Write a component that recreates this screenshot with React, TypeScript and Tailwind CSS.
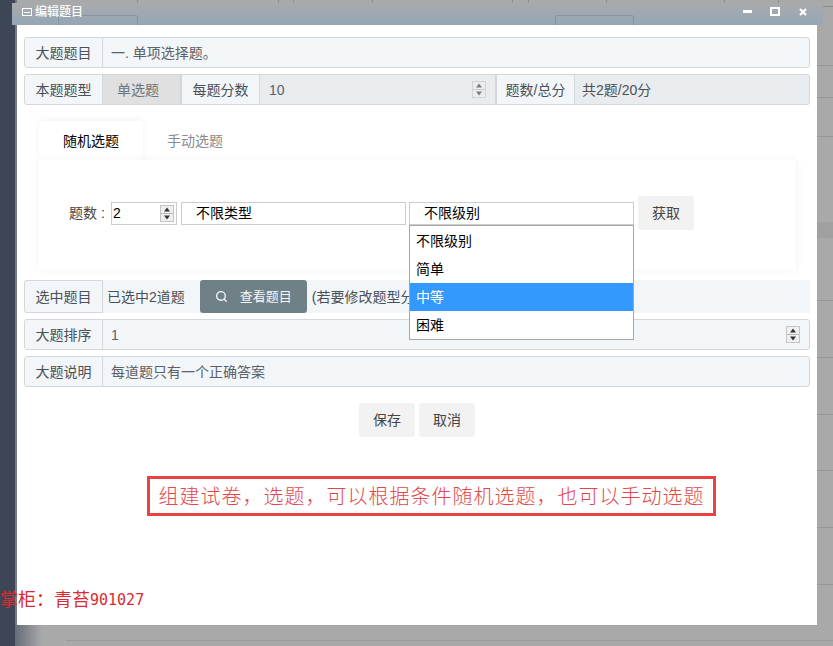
import { Search } from 'lucide-react';

const cjk = "font-['Liberation_Sans','Noto_Sans_CJK_SC',sans-serif]";

function Spinner({ className = '' }: { className?: string }) {
  return (
    <span className={`flex h-[17px] w-[14px] flex-col border border-[#c4c4c4] bg-[#efefef] ${className}`}>
      <svg viewBox="0 0 12 7" className="h-[7px] w-full">
        <path d="M6 1.5 9 5.5H3z" fill="#333" />
      </svg>
      <span className="h-px bg-[#b8b8b8]" />
      <svg viewBox="0 0 12 7" className="h-[7px] w-full">
        <path d="M3 1.5h6L6 5.5z" fill="#333" />
      </svg>
    </span>
  );
}

function Label({ children }: { children: React.ReactNode }) {
  return (
    <div className="flex w-[78px] shrink-0 items-center justify-center border-r border-[#d5d9dd] bg-[#f3f6f9] pt-px text-[#495057]">
      {children}
    </div>
  );
}

function Row({ label, value, spinner }: { label: string; value: string; spinner?: boolean }) {
  return (
    <div className="flex h-[31px] overflow-hidden rounded-[3px] border border-[#d3d6da] bg-[#f3f6f9] text-[#495057]">
      <Label>{label}</Label>
      <div className="flex flex-1 items-center justify-between pl-[8px] pr-[9px] text-[#5a6168]">
        <span className="pt-px">{value}</span>
        {spinner && <Spinner />}
      </div>
    </div>
  );
}

function GrayButton({ children }: { children: React.ReactNode }) {
  return (
    <button className="flex h-[34px] w-[56px] items-center justify-center rounded-[3px] bg-[#f2f2f2] text-[#444]">
      {children}
    </button>
  );
}

const levels = ['不限级别', '简单', '中等', '困难'];

// rules of the dimmed page that show at the right of the dialog
const pageLines = [65, 97, 136, 300, 357, 414, 470, 527, 584];

export default function App() {
  return (
    <div className={`relative h-[646px] w-[833px] overflow-hidden bg-[#a9a9a9] text-[14px] ${cjk}`}>
      {/* dimmed page behind the dialog */}
      <div className="absolute left-0 top-0 h-full w-[15px] bg-[#3c4656]" />
      <div className="absolute left-[15px] top-0 h-[625px] w-[2px] bg-[#747c88]" />
      <div className="absolute left-[15px] top-[625px] h-[21px] w-[27px] bg-gradient-to-r from-[#666e7a] to-[#a9a9a9]" />
      <div className="absolute left-[58px] top-0 h-[7px] w-[221px] rounded-br-[3px] border-b border-r border-[#8d8d8d]" />
      <div className="absolute left-[137px] top-0 h-[7px] w-px bg-[#8d8d8d]" />
      <div className="absolute left-[293px] top-0 h-[7px] w-[220px] rounded-b-[3px] border border-t-0 border-[#8d8d8d]" />
      <div className="absolute left-[372px] top-0 h-[7px] w-px bg-[#8d8d8d]" />
      <div className="absolute left-[528px] top-0 h-[7px] w-[197px] rounded-b-[3px] border border-t-0 border-[#8d8d8d]" />
      <div className="absolute left-[606px] top-0 h-[7px] w-px bg-[#8d8d8d]" />
      <div className="absolute left-[778px] top-0 h-[7px] w-[55px] border-b border-l border-[#8d8d8d]" />
      {pageLines.map((y) => (
        <div key={y} className="absolute left-[817px] h-px w-[16px] bg-[#969696]" style={{ top: y }} />
      ))}
      <div className="absolute left-[817px] top-[222px] h-[16px] w-[16px] bg-[#a0a0a0]" />
      <div className="absolute left-[66px] top-[640px] h-px w-[767px] bg-[#999999]" />

      {/* dialog window */}
      <div className="absolute left-[12px] top-[3px] h-[22px] w-[811px] bg-gradient-to-b from-[#a9aaab] to-[#95a6b6] text-[12px] text-white">
        <div className="absolute left-[46px] top-[12px] h-[10px] w-[80px] rounded-t-[3px] border border-b-0 border-[#85949f]" />
        <div className="absolute left-[543px] top-[12px] h-[10px] w-[79px] rounded-t-[3px] border border-b-0 border-[#85949f]" />
        <div className="relative flex h-[17px] items-center pl-[10px]">
          <svg width="10" height="8" viewBox="0 0 10 8" className="mr-[3px]" fill="none" stroke="#fff">
            <rect x="0.5" y="0.5" width="9" height="7" />
            <path d="M2 4.5h6" />
          </svg>
          <span className="font-medium">编辑题目</span>
          <span className="ml-auto mr-[18px] h-[3px] w-[9px] bg-white" />
          <span className="mr-[19px] h-[9px] w-[10px] border-2 border-white" />
          <svg width="8" height="8" viewBox="0 0 8 8" className="mr-[16px]" stroke="#fff" strokeWidth="2.2">
            <path d="M1 1l6 6M7 1L1 7" />
          </svg>
        </div>
      </div>

      <div className="absolute left-[17px] top-[25px] flex h-[600px] w-[800px] flex-col bg-white px-[7px] pt-[12px]">
        <Row label="大题题目" value="一. 单项选择题。" />

        <div className="mt-[6px] flex h-[31px] overflow-hidden rounded-[3px] border border-[#d3d6da] bg-[#e9ecef] text-[#495057]">
          <Label>本题题型</Label>
          <div className="flex w-[79px] items-center border-r-2 border-[#d3d6da] bg-[#e0e0e0] pl-[14px] pt-px text-[#6c757d]">
            单选题
          </div>
          <Label>每题分数</Label>
          <div className="flex w-[235px] items-center justify-between pl-[9px] pr-[9px] text-[#5a6168]">
            <span className="pt-px">10</span>
            <Spinner className="opacity-60" />
          </div>
          <div className="w-[2px] bg-[#d3d6da]" />
          <Label>题数/总分</Label>
          <div className="flex flex-1 items-center pl-[7px] pt-px">共2题/20分</div>
        </div>

        {/* tabs */}
        <div className="mt-[16px] flex pl-[15px]">
          <div className="flex h-[39px] w-[104px] items-center justify-center rounded-t-[3px] bg-white pt-[2px] text-black shadow-[0_-2px_6px_rgba(0,0,0,0.05)]">
            随机选题
          </div>
          <div className="flex h-[39px] w-[104px] items-center justify-center pt-[2px] text-[#8a8a8a]">手动选题</div>
        </div>

        <div className="relative ml-[14px] mr-[14px] flex h-[110px] items-center bg-white pl-[31px] pb-[4px] shadow-[0_0_8px_rgba(0,0,0,0.06)]">
          <span className="mr-[4px] w-[38px] whitespace-nowrap text-[#444]">题数 :</span>
          <div className="flex h-[23px] w-[66px] items-center justify-between border border-[#ccc] pl-[1px] pr-[1px] text-black">
            <span>2</span>
            <Spinner className="mr-[1px]" />
          </div>
          <div className="ml-[4px] flex h-[23px] w-[225px] items-center border border-[#ccc] pl-[14px] text-black">不限类型</div>
          <div className="relative ml-[3px] flex h-[23px] w-[225px] items-center border border-[#ccc] pl-[14px] text-black">
            不限级别
            <div className="absolute left-[-1px] top-[22px] z-10 w-[225px] border border-[#a6a6a6] bg-white pt-px">
              {levels.map((level) => (
                <div
                  key={level}
                  className={`flex h-[28px] items-center pl-[6px] pt-px ${level === '中等' ? 'bg-[#3399ff] text-white' : 'text-black'}`}
                >
                  {level}
                </div>
              ))}
            </div>
          </div>
          <div className="ml-[4px]">
            <GrayButton>获取</GrayButton>
          </div>
        </div>

        <div className="mt-[10px] flex h-[33px] items-center bg-[#f3f6f9] text-[#495057]">
          <div className="flex h-full w-[79px] items-center justify-center rounded-l-[3px] border border-[#d3d6da] pt-px text-[#495057]">
            选中题目
          </div>
          <span className="ml-[4px] pt-px">已选中2道题</span>
          <button className="ml-[15px] flex h-full w-[107px] items-center justify-center gap-[12px] rounded-[3px] bg-[#6f8087] text-[13px] text-[#f4f6f7]">
            <Search size={13} strokeWidth={2.5} />
            查看题目
          </button>
          <span className="ml-[5px] w-[97px] overflow-hidden whitespace-nowrap pt-px">(若要修改题型分</span>
        </div>

        <div className="mt-[6px]">
          <Row label="大题排序" value="1" spinner />
        </div>
        <div className="mt-[6px]">
          <Row label="大题说明" value="每道题只有一个正确答案" />
        </div>

        <div className="mt-[16px] flex justify-center gap-[4px]">
          <GrayButton>保存</GrayButton>
          <GrayButton>取消</GrayButton>
        </div>

        <div className="ml-[123px] mt-[39px] flex h-[40px] w-[569px] items-center justify-center border-[3px] border-[#e84242] pt-[2px] text-[20px] font-light tracking-[1px] text-[#e2474c]">
          组建试卷，选题，可以根据条件随机选题，也可以手动选题
        </div>
      </div>

      {/* watermark */}
      <div className="absolute left-0 top-[588px] flex items-center text-[18px] leading-[24px] text-[#dd2a30]">
        掌柜：青苔
        <span className="font-['DejaVu_Sans_Mono',monospace] text-[15px]">901027</span>
      </div>
    </div>
  );
}
